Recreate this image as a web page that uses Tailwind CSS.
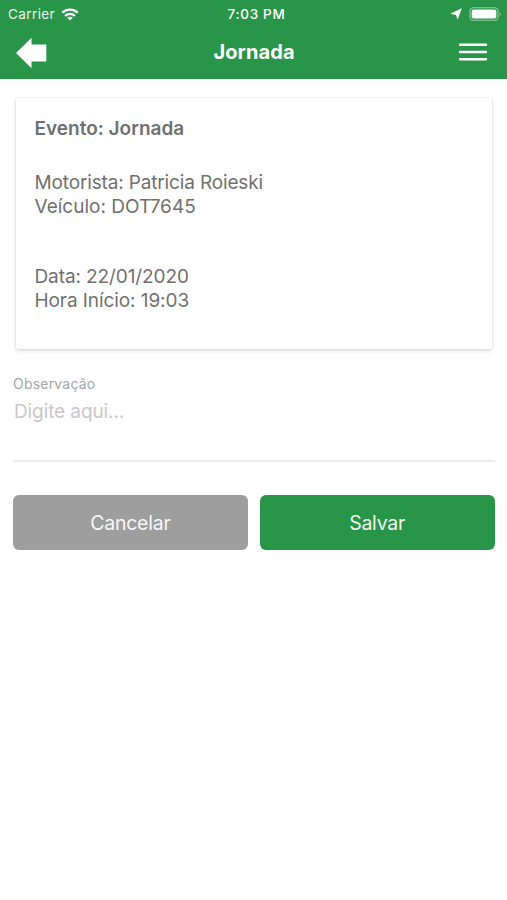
<!DOCTYPE html>
<html lang="pt-BR">
<head>
<meta charset="utf-8">
<title>Jornada</title>
<script src="https://cdn.jsdelivr.net/npm/@tailwindcss/browser@4"></script>
</head>
<body class="min-h-screen bg-white font-['Inter',sans-serif] text-[#707070]">
<header class="h-[79px] bg-[#299549] text-white">
  <div class="grid h-[27px] grid-cols-3 items-center pl-[8px] pr-[5px]">
    <div class="flex items-center gap-[6px]">
      <span class="pt-px text-[13.5px] leading-[27px] tracking-[0.4px] text-white/90">Carrier</span>
      <svg class="h-[13px] w-[18px]" viewBox="0 0 18 13" fill="none" stroke="currentColor" stroke-width="2.3"><path d="M1.2 4.7C5.6.5 12.4.5 16.8 4.7M4.1 7.8c2.8-2.6 7-2.6 9.8 0"/><path d="M6.2 9.8c1.6-1.4 4-1.4 5.600 0L9 12.600z" fill="currentColor" stroke="none"/></svg>
    </div>
    <span class="pl-[3px] pt-px text-center text-[13.5px] font-medium leading-[27px] tracking-[0.7px]">7:03 PM</span>
    <div class="flex items-center justify-end gap-[7px]">
      <svg class="h-[12px] w-[12px]" viewBox="0 0 12 12" fill="currentColor"><path d="M11.800.3 7.700 11.800 5.900 6.900.2 5.700z"/></svg>
      <svg class="h-[14px] w-[33px]" viewBox="0 0 33 14"><rect x="1" y=".7" width="28" height="12.6" rx="3.6" fill="none" stroke="#8fc9a0" stroke-width="1.1"/><rect x="2.7" y="2.4" width="24.6" height="9.2" rx="2" fill="#fff"/><path d="M30.6 4.7q2.2 2.3 0 4.6z" fill="#8fc9a0"/></svg>
    </div>
  </div>
  <div class="grid h-[50px] grid-cols-3 items-center pl-[15px] pr-[19px]">
    <svg class="mt-px h-[32px] w-[32px]" viewBox="0 0 32 32" fill="currentColor"><path d="M1 16 16.5.8V7.500H31.300V24.500H16.500V31.200z"/></svg>
    <h1 class="pl-[5px] text-center text-[20px] font-bold leading-[50px] tracking-[0.1px]">Jornada</h1>
    <svg class="h-[20px] w-[30px] justify-self-end" viewBox="0 0 30 20" stroke="currentColor" stroke-width="2.4" stroke-linecap="round"><path d="M2 2.800h26M2 10h26M2 17.200h26"/></svg>
  </div>
</header>
<main class="pl-[13px] pr-[12.5px] pt-[19px]">
  <section class="mx-[3px] h-[251px] w-[476px] rounded-[2px] bg-white pl-[18.5px] pt-[19px] text-[19px] leading-[23.6px] shadow-[0_0_2px_rgba(0,0,0,0.16),0_2px_4px_rgba(0,0,0,0.12)]">
    <h2 class="font-semibold">Evento: Jornada</h2>
    <p class="mt-[30.500px] tracking-[-0.15px]">Motorista: Patricia Roieski</p>
    <p>Veículo: DOT7645</p>
    <p class="mt-[47px] tracking-[-0.1px]">Data: 22/01/2020</p>
    <p class="tracking-[-0.08px]">Hora Início: 19:03</p>
  </section>
  <div class="mt-[26px] flex h-[87px] flex-col border-b-2 border-[#ececec]">
    <span class="text-[14px] leading-[18px] tracking-[0.2px] text-[#a5a5a5]">Observação</span>
    <p class="mt-[7px] pl-px text-[19px] leading-[24px] tracking-[-0.1px] text-[#c8c8cb]">Digite aqui...</p>
  </div>
  <div class="mt-[33px] grid grid-cols-2 gap-[12px]">
    <button class="h-[55px] rounded-[6px] bg-[#9e9e9e] pt-[2px] text-[19.500px] tracking-[-0.25px] text-white/95">Cancelar</button>
    <button class="h-[55px] rounded-[6px] bg-[#299549] pt-[2px] text-[19.500px] tracking-[-0.25px] text-white/95">Salvar</button>
  </div>
</main>
</body>
</html>
